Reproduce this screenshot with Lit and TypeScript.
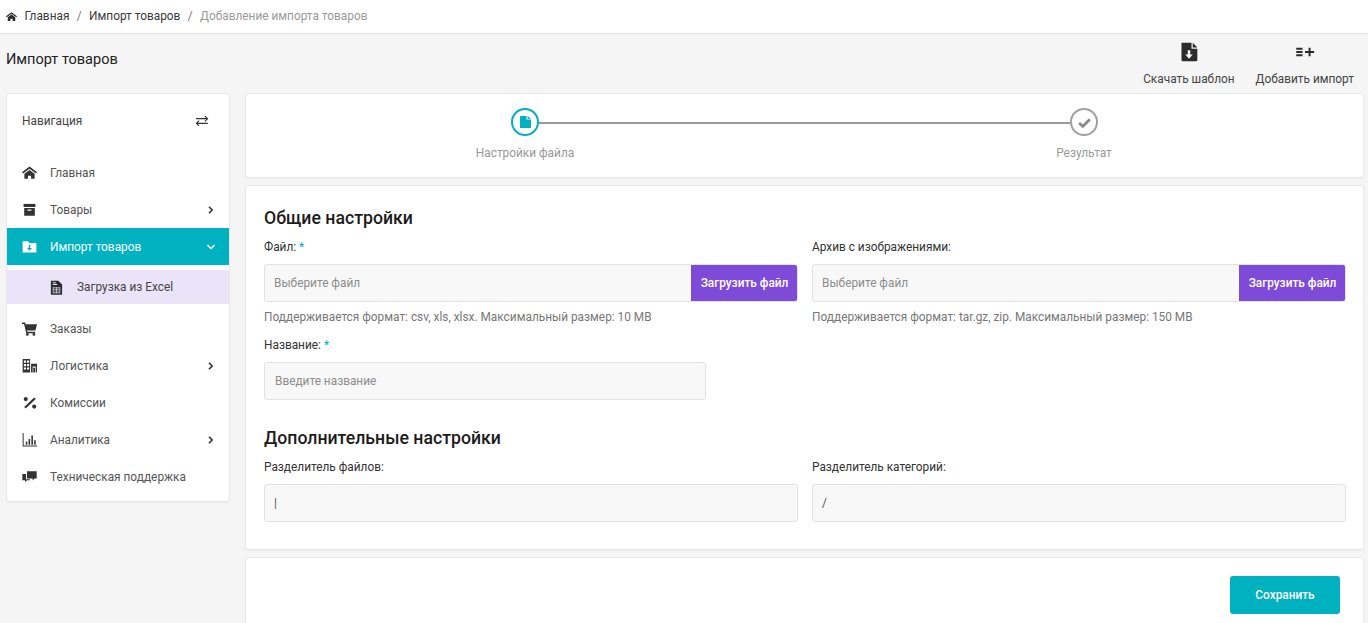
import { LitElement, html, css, svg } from "lit";
import { customElement } from "lit/decorators.js";

const icons: Record<string, any> = {
  home: svg`<path d="M12 2.500 0 11.500l1.600 2.200L12 6l10.400 7.700 1.600-2.200z"/><path d="M12 7.800 3.800 13.800V22h5.700v-5h5v5h5.700v-8.200z"/>`,
  box: svg`<path d="M2.500 3h19v5h-19z"/><path fill-rule="evenodd" d="M3.500 9.500h17V22h-17zM9 12v1.800h6V12z"/>`,
  folder: svg`<path fill-rule="evenodd" d="M1 3.500h8.500l2.500 3h11V21.500H1zM10.800 9.500v5H8l4 4.200 4-4.200h-2.800v-5z"/>`,
  excel: svg`<path fill-rule="evenodd" d="M3 1h12l6 6v15.500a1 1 0 0 1-1 1H4a1 1 0 0 1-1-1zM6 11v10h12V11zM7 12h4.500v2H7zM12.500 12H17v2h-4.500zM7 15h4.500v2H7zM12.500 15H17v2h-4.500zM7 18h4.500v2H7zM12.500 18H17v2h-4.500zM6 6.500V8h7V6.500zM6 3.500V5h5V3.500z"/>`,
  cart: svg`<path d="M0 2.500h5l.8 2.800H24l-2.500 10H8l.5 2H21v2.200H6.800L3.300 4.700H0z"/><circle cx="8.500" cy="21.500" r="2.200"/><circle cx="19" cy="21.500" r="2.200"/>`,
  city: svg`<path fill-rule="evenodd" d="M1 1.500h12V23H1zM3 4v3.500h3.500V4zM8 4v3.500h3.500V4zM3 9.500V13h3.500V9.500zM8 9.500V13h3.500V9.500zM3 15v3.500h3.500V15zM8 15v3.500h3.500V15z"/><path fill-rule="evenodd" d="M14.500 9H24v14h-2v-9.500h-5V23h-2.500z"/><path d="M18 15.500h3V23h-3z"/>`,
  percent: svg`<path d="M19.500 4 22 6.500 6 21.500 3.500 19z"/><circle cx="6" cy="6.500" r="3.300"/><circle cx="19.500" cy="18.500" r="3.300"/>`,
  chart: svg`<path d="M1 1.500h1.600v20H24v1.600H1z"/><path d="M6 15h2.500v5.500H6zM10.500 11H13v9.500h-2.500zM15 5.500h2.500v15H15zM19.500 13H22v7.500h-2.500z"/>`,
  comments: svg`<path d="M8 3.500h15.500v11.500h-3.500l-3 3.500V15H8z"/><path d="M6.500 8v8.500h6V18H8l-3 3v-3H.5V8z"/>`,
};

function icon(name: string) {
  return html`<svg class="nav-ic" viewBox="0 0 24 24" fill="currentColor">${icons[name]}</svg>`;
}

const chevRight = html`<svg class="chev" viewBox="0 0 10 10" fill="none" stroke="currentColor" stroke-width="1.600"><path d="M3 1.800 6.200 5 3 8.200"/></svg>`;
const chevDown = html`<svg class="chev" viewBox="0 0 10 10" fill="none" stroke="currentColor" stroke-width="1.600"><path d="M1.500 3.200 5 6.500 8.500 3.200"/></svg>`;

@customElement("app-root")
export class AppRoot extends LitElement {
  static styles = css`
    :host {
      display: block;
      width: 1368px;
      height: 623px;
      overflow: hidden;
      background: #f5f5f5;
      font-family: Roboto, "Liberation Sans", sans-serif;
      font-size: 11.85px;
      color: #333;
    }
    * { box-sizing: border-box; }
    .crumbs {
      height: 34px;
      background: #fff;
      border-bottom: 1px solid #e4e4e4;
      display: flex;
      align-items: center;
      padding: 0 6px 1px;
      color: #3a3a3a;
      gap: 7.400px;
    }
    .crumbs svg { width: 11px; height: 11px; color: #2b2b2b; }
    .crumbs .sep { color: #777; }
    .crumbs .cur { color: #9a9a9a; }
    .head {
      height: 59px;
      display: flex;
      justify-content: space-between;
      padding: 0 14px 0 6px;
    }
    .head h1 {
      margin: 16px 0 0;
      font-size: 14.500px;
      line-height: 20px;
      font-weight: 400;
      color: #222;
    }
    .actions { display: flex; gap: 21px; padding-top: 8px; }
    .action {
      display: flex;
      flex-direction: column;
      align-items: center;
      color: #444;
      line-height: 14px;
    }
    .action svg { width: 20px; height: 20px; color: #2b2b2b; margin-bottom: 10px; }
    .body {
      display: grid;
      grid-template-columns: 224px 1119px;
      gap: 15px;
      padding-left: 6px;
      align-items: start;
    }
    .card {
      background: #fff;
      border: 1px solid #e8e8e8;
      border-radius: 3px;
      box-shadow: 0 1px 1px rgba(0,0,0,.04);
    }
    .side { height: 409px; }
    .side-head {
      height: 52px;
      padding: 1px 20px 0 15px;
      display: flex;
      align-items: center;
      justify-content: space-between;
      color: #444;
      margin-bottom: 8px;
    }
    .side-head svg { width: 14px; height: 14px; color: #333; }
    .item {
      height: 37px;
      display: flex;
      align-items: center;
      padding: 0 13px 0 15px;
      color: #555;
    }
    .item .nav-ic { width: 15px; height: 15px; color: #333; margin-right: 13px; flex: none; }
    .item .lbl { flex: 1; }
    .chev { width: 10px; height: 10px; color: #333; flex: none; }
    .item.active { background: #00b1bf; color: #fff; }
    .item.active .nav-ic, .item.active .chev { color: #fff; }
    .sub {
      height: 34px;
      margin: 5px 0 6px;
      background: #ebe4f8;
      display: flex;
      align-items: center;
      padding-left: 42px;
      color: #444;
    }
    .sub .nav-ic { width: 15px; height: 15px; color: #2b2b2b; margin-right: 13px; }
    .main { display: flex; flex-direction: column; gap: 7px; }
    .stepper { height: 85px; position: relative; display: flex; justify-content: space-between; padding: 14px 229px 0; }
    .step { display: flex; flex-direction: column; align-items: center; width: 100px; color: #999; position: relative; z-index: 1; }
    .circle {
      width: 28px; height: 28px; border-radius: 50%;
      background: #fff; border: 2px solid #a0a0a0;
      display: flex; align-items: center; justify-content: center;
      margin-bottom: 10px; color: #8a8a8a;
    }
    .circle.on { border-color: #00b1bf; color: #00b1bf; }
    .doc { width: 11px; height: 12px; }
    .tick { width: 13px; height: 13px; }
    .step-line { position: absolute; left: 293px; right: 293px; top: 28px; height: 2px; background: #9a9a9a; }
    .step span { line-height: 14px; }
    .form { height: 365px; padding: 20px 18px 0; }
    h3 {
      margin: 0;
      font-size: 17.700px;
      line-height: 24px;
      font-weight: 500;
      color: #1c1c1c;
    }
    .row { display: grid; grid-template-columns: 534px 534px; column-gap: 14px; }
    .label { line-height: 14px; color: #333; }
    .req { color: #00b1bf; }
    .f-label { margin: 10px 0 10px; display: block; }
    .input {
      height: 38px;
      border: 1px solid #e3e3e3;
      border-radius: 3px;
      background: #f8f8f8;
      display: flex;
      align-items: center;
      padding-left: 9px;
      color: #8c8c8c;
    }
    .input.val { color: #555; }
    .file { padding-right: 0; overflow: hidden; justify-content: space-between; }
    .upload {
      width: 107px;
      height: 38px;
      margin-right: -1px;
      background: #7e4bd8;
      color: #fff;
      display: flex; align-items: center; justify-content: center;
      border-radius: 0 3px 3px 0;
      font-weight: 500;
      flex: none;
    }
    .hint { margin: 8px 0 0; line-height: 14px; color: #777; }
    .name-label { margin: 14px 0 10px; display: block; }
    .name { width: 442px; padding-left: 10px; }
    .extra { margin-top: 26px; }
    .extra .f-label { margin: 10px 0 10px; }
    .foot { height: 80px; display: flex; justify-content: flex-end; padding: 18px 23px 0 0; }
    .save {
      width: 110px; height: 38px;
      background: #00b1bf; color: #fff;
      border-radius: 3px;
      display: flex; align-items: center; justify-content: center;
      font-weight: 500;
    }
  `;

  private navItem(ic: string, label: string, chev = false) {
    return html`<div class="item">${icon(ic)}<span class="lbl">${label}</span>${chev ? chevRight : ""}</div>`;
  }

  render() {
    return html`
      <div class="crumbs">
        <svg viewBox="0 0 24 24" fill="currentColor">${icons.home}</svg>
        <span>Главная</span><span class="sep">/</span>
        <span>Импорт товаров</span><span class="sep">/</span>
        <span class="cur">Добавление импорта товаров</span>
      </div>
      <div class="head">
        <h1>Импорт товаров</h1>
        <div class="actions">
          <div class="action">
            <svg viewBox="0 0 24 24" fill="currentColor"><path fill-rule="evenodd" d="M3 1h12v7h7v13.500a1.500 1.500 0 0 1-1.500 1.500h-16A1.500 1.500 0 0 1 3 21.500zM10.500 10v5H7.500l4.500 5 4.500-5h-3v-5z"/><path d="M16.500 1 22 6.500h-5.500z"/></svg>
            <span>Скачать шаблон</span>
          </div>
          <div class="action">
            <svg viewBox="0 0 24 24" fill="currentColor"><path d="M1.500 7h7.500v2.400H1.500zM1.500 10.800h7.500v2.400H1.500zM1.500 14.600h7.500V17H1.500zM16.300 7h2.400v3.800H23v2.400h-4.300V17h-2.400v-3.800H12v-2.400h4.300z"/></svg>
            <span>Добавить импорт</span>
          </div>
        </div>
      </div>
      <div class="body">
        <aside class="card side">
          <div class="side-head">
            <span>Навигация</span>
            <svg viewBox="0 0 24 24" fill="none" stroke="currentColor" stroke-width="2"><path d="M2 8h19M17 3.500 21.500 8 17 12.500M22 16H3M7 11.500 2.500 16 7 20.500"/></svg>
          </div>
          ${this.navItem("home", "Главная")}
          ${this.navItem("box", "Товары", true)}
          <div class="item active">${icon("folder")}<span class="lbl">Импорт товаров</span>${chevDown}</div>
          <div class="sub">${icon("excel")}<span>Загрузка из Excel</span></div>
          ${this.navItem("cart", "Заказы")}
          ${this.navItem("city", "Логистика", true)}
          ${this.navItem("percent", "Комиссии")}
          ${this.navItem("chart", "Аналитика", true)}
          ${this.navItem("comments", "Техническая поддержка")}
        </aside>
        <main class="main">
          <section class="card stepper">
            <div class="step-line"></div>
            <div class="step">
              <div class="circle on"><svg class="doc" viewBox="0 0 11 12" fill="currentColor"><path d="M.5 0h6v3.500H11v8a.5.500 0 0 1-.5.500h-10a.5.500 0 0 1-.5-.5V.500A.5.500 0 0 1 .5 0zM7.500 0 11 2.700H7.500z"/></svg></div>
              <span>Настройки файла</span>
            </div>
            <div class="step">
              <div class="circle"><svg class="tick" viewBox="0 0 24 24" fill="none" stroke="currentColor" stroke-width="5"><path d="M2 13l7 6L22 6"/></svg></div>
              <span>Результат</span>
            </div>
          </section>
          <section class="card form">
            <h3>Общие настройки</h3>
            <div class="row">
              <div>
                <span class="label f-label">Файл: <span class="req">*</span></span>
                <div class="input file"><span>Выберите файл</span><div class="upload">Загрузить файл</div></div>
                <p class="hint">Поддерживается формат: csv, xls, xlsx. Максимальный размер: 10 MB</p>
              </div>
              <div>
                <span class="label f-label">Архив с изображениями:</span>
                <div class="input file"><span>Выберите файл</span><div class="upload">Загрузить файл</div></div>
                <p class="hint">Поддерживается формат: tar.gz, zip. Максимальный размер: 150 MB</p>
              </div>
            </div>
            <span class="label name-label">Название: <span class="req">*</span></span>
            <div class="input name">Введите название</div>
            <div class="extra">
              <h3>Дополнительные настройки</h3>
              <div class="row">
                <div>
                  <span class="label f-label">Разделитель файлов:</span>
                  <div class="input val">|</div>
                </div>
                <div>
                  <span class="label f-label">Разделитель категорий:</span>
                  <div class="input val">/</div>
                </div>
              </div>
            </div>
          </section>
          <section class="card foot"><div class="save">Сохранить</div></section>
        </main>
      </div>
    `;
  }
}
